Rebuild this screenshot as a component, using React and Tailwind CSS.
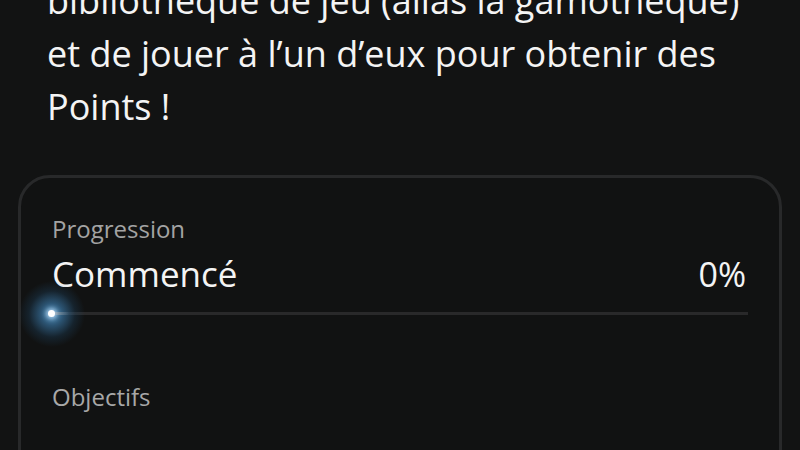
export default function App() {
  return (
    <div className="w-[800px] h-[450px] overflow-hidden bg-[#121313] text-white font-['Open_Sans',sans-serif]">
      <p className="mt-[-26px] pl-[47px] text-[36px] leading-[53px] text-[#f4f4f4]">
        <span className="block whitespace-nowrap">bibliothèque de jeu (alias la gamothèque)</span>
        <span className="block whitespace-nowrap">et de jouer à l’un d’eux pour obtenir des</span>
        <span className="block whitespace-nowrap">Points !</span>
      </p>

      <div className="mx-[18px] mt-[42px] h-[400px] rounded-[32px] border-[3px] border-[#28292a] bg-[#111212] px-[31px] pt-[35px]">
        <div className="text-[24px] leading-[32px] text-[#a3a3a3]">Progression</div>
        <div className="mt-[7px] flex items-center justify-between text-[34px] leading-[44px] text-[#f4f4f4]">
          <span className="text-[35px]">Commencé</span>
          <span className="pr-[2px]">0%</span>
        </div>
        <div className="relative mt-[16px] h-[3px] bg-[#29292a]">
          {/* glow behind the start point */}
          <div className="absolute left-[-33px] top-[-31px] h-[66px] w-[66px] bg-[radial-gradient(circle_closest-side,rgba(90,160,210,0.9)_0%,rgba(60,125,175,0.6)_35%,rgba(35,85,125,0.25)_70%,rgba(18,19,19,0)_100%)]" />
          <div className="absolute left-[3px] top-0 h-[3px] w-[14px] bg-gradient-to-r from-[#7d8c98] to-transparent" />
          <div className="absolute left-[-4px] top-[-2px] h-[7px] w-[7px] rounded-full bg-white shadow-[0_0_4px_2px_rgba(200,230,255,0.7)]" />
        </div>
        <div className="mt-[66px] text-[24px] leading-[32px] text-[#a8a8a8]">Objectifs</div>
      </div>
    </div>
  );
}
